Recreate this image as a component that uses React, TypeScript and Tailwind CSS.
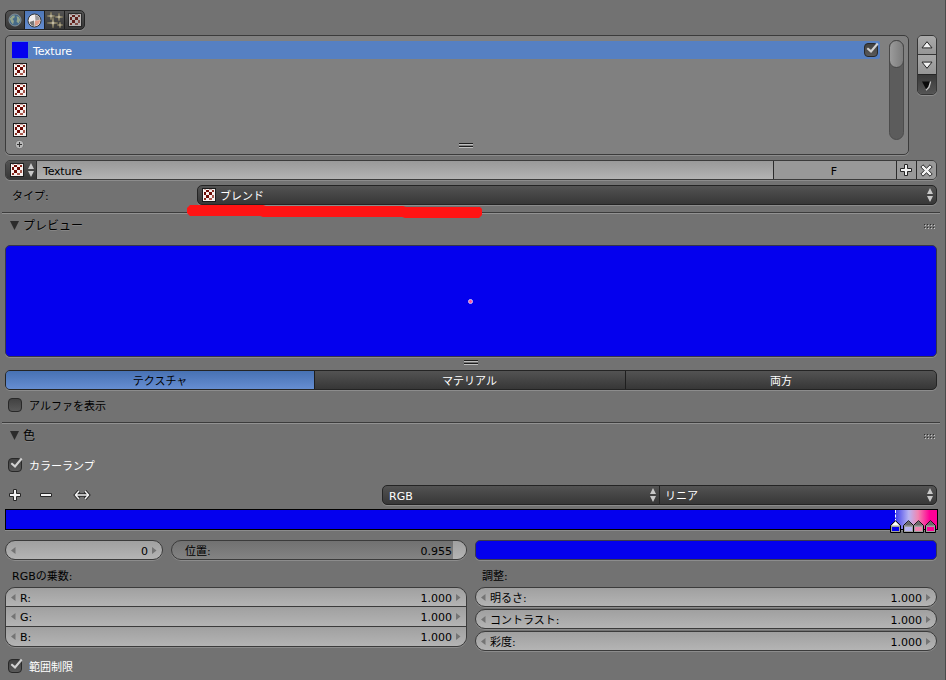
import type { ReactNode } from 'react';

const emboss = 'shadow-[0_1px_0_#8c8c8c]';
const lightFill = 'bg-linear-to-b from-[#999999] to-[#b3b3b3]';
const numberFill = 'bg-linear-to-b from-[#a0a0a0] to-[#b4b4b4]';
const darkFill = 'bg-linear-to-b from-[#535353] to-[#373737]';

const rampStops = [
  { left: 884, color: '#0400ee', active: true },
  { left: 897, color: '#b9b5f2', active: false },
  { left: 907, color: '#f285b0', active: false },
  { left: 919, color: '#ff0096', active: false },
];

const multipliers = ['R:', 'G:', 'B:'];
const adjustments = ['明るさ:', 'コントラスト:', '彩度:'];

const checks = [
  [4, 2, 3, 2], [10, 2, 2, 2],
  [2, 4, 2, 3], [7, 4, 3, 3],
  [4, 7, 3, 3], [10, 7, 2, 3],
  [2, 10, 2, 2], [7, 10, 3, 2],
  [2, 1, 2, 1], [7, 1, 3, 1],
];

function CheckerIcon({ dim = false }: { dim?: boolean }) {
  return (
    <svg width="14" height="14" shapeRendering="crispEdges" opacity={dim ? 0.65 : 1} className="shrink-0">
      <rect width="14" height="14" fill="#1c1c1c" />
      <rect x="1" y="1" width="12" height="12" fill="#f6f0ef" />
      {checks.map(([x, y, w, h], i) => (
        <rect key={i} x={x} y={y} width={w} height={h} fill={y === 1 ? '#c9a09b' : x + y > 15 ? '#a8584d' : x + y > 11 ? '#8a2c20' : '#6e0b04'} />
      ))}
    </svg>
  );
}

function WorldIcon() {
  return (
    <svg width="14" height="14" viewBox="0 0 14 14">
      <circle cx="7" cy="7" r="6" fill="#456a88" stroke="#84919a" />
      <path d="M1.8 5.5L4.5 2.5L7 2.5L6.5 4.5L4.5 6L6 8L5 11.5L3 9Z" fill="#93a58d" />
      <path d="M8.5 3L11 4L12.3 7L10.5 10.5L8.5 8.5L9.2 6Z" fill="#93a58d" />
    </svg>
  );
}

function MaterialIcon() {
  return (
    <svg width="15" height="15" viewBox="0 0 15 15">
      <circle cx="7.5" cy="7.5" r="6.5" fill="#f2eeee" stroke="#333" />
      <path d="M8 2A5.5 5.5 0 0 1 13 6.5L8.5 8Z" fill="#9b9696" />
      <path d="M2.5 9L7 7.5L7.5 13A5.5 5.5 0 0 1 2.5 9Z" fill="#777777" />
      <path d="M8 8L13 7A5.5 5.5 0 0 1 8 13Z" fill="#df9b87" />
    </svg>
  );
}

function ParticlesIcon() {
  return (
    <svg width="16" height="16" viewBox="0 0 16 16" fill="#d2ccb8" stroke="#8d8159" strokeWidth="0.5">
      <path d="M4 0L4.7 3.3L8 4L4.7 4.7L4 8L3.3 4.7L0 4L3.3 3.3Z" />
      <path d="M12 1L12.7 4.3L16 5L12.7 5.7L12 9L11.3 5.7L8 5L11.3 4.3Z" />
      <path d="M6 5L6.8 10.2L11 11L6.8 11.8L6 16L5.2 11.8L0 11L5.2 10.2Z" />
      <path d="M13 10L13.6 12.4L16 13L13.6 13.6L13 16L12.4 13.6L10 13L12.4 12.4Z" />
    </svg>
  );
}

function UpDown() {
  return (
    <svg width="6" height="14" viewBox="0 0 6 14" fill="#c8c8c8">
      <path d="M3 0L6 6H0ZM3 14L0 8H6Z" />
    </svg>
  );
}

function Checkbox({ checked = false }: { checked?: boolean }) {
  return (
    <svg width="16" height="16" viewBox="0 0 16 16" className="shrink-0 overflow-visible">
      <defs>
        <linearGradient id="box" x2="0" y2="1">
          <stop stopColor="#414141" />
          <stop offset="1" stopColor="#5a5a5a" />
        </linearGradient>
      </defs>
      <rect x=".5" y="1.5" width="13" height="13" rx="3.5" fill="url(#box)" stroke="#282828" />
      {checked && <path d="M3.3 6.2L7 9.4L13.7 1.5" fill="none" stroke="#d2d2d2" strokeWidth="2.1" />}
    </svg>
  );
}

function Arrow({ flip = false }: { flip?: boolean }) {
  return (
    <svg width="5" height="7" viewBox="0 0 5 7" fill="#747474">
      <path d={flip ? 'M0 0L4.5 3.5L0 7Z' : 'M4.5 0L0 3.5L4.5 7Z'} />
    </svg>
  );
}

function Grip() {
  return (
    <svg width="14" height="6" shapeRendering="crispEdges">
      <path d="M0 .5H14M0 3.5H14" stroke="#1e1e1e" />
      <path d="M0 1.5H14M0 4.5H14" stroke="#c0c0c0" />
    </svg>
  );
}

function PanelHeader({ title }: { title: string }) {
  return (
    <div className="flex h-[22px] items-center pr-[10px] pl-[7px]">
      <svg width="9" height="9" viewBox="0 0 9 9">
        <path d="M0 0H9L4.5 9Z" fill="#2b2b2b" />
      </svg>
      <span className="ml-1 pt-0.5 text-xs leading-[14px] [text-shadow:0_1px_0_#858585]">{title}</span>
      <svg width="11" height="6" shapeRendering="crispEdges" className="mt-[3px] ml-auto">
        {[0, 3, 6, 9].map((x) => (
          <g key={x}>
            <path d={`M${x} .5h1M${x} 3.5h1`} stroke="#303030" />
            <path d={`M${x + 1} 1.5h1M${x + 1} 4.5h1`} stroke="#c8c8c8" />
          </g>
        ))}
      </svg>
    </div>
  );
}

function Divider() {
  return <div className="ml-0.5 h-0.5 w-[938px] border-t border-b border-t-[#3c3c3c] border-b-[#929292]" />;
}

function NumberField({ label, value, className }: { label?: string; value: string; className: string }) {
  return (
    <div className={`flex items-center border-[#3b3b3b] pr-[5px] pl-[5px] ${numberFill} ${className}`}>
      <Arrow />
      <span className="ml-1">{label}</span>
      <span className="mr-1 ml-auto">{value}</span>
      <Arrow flip />
    </div>
  );
}

function Dropdown({ children, className }: { children: ReactNode; className: string }) {
  return (
    <div className={`flex h-5 items-center border border-[#242424] pr-[3px] text-white ${darkFill} ${emboss} ${className}`}>
      {children}
      <span className="ml-auto">
        <UpDown />
      </span>
    </div>
  );
}

function TextureList() {
  return (
    <div className="mt-[5px] ml-[5px] flex h-[120px]">
      <div className={`relative flex w-[904px] rounded-[5px] border border-[#3b3b3b] bg-[#808080] ${emboss}`}>
        <div className="ml-1.5 w-[868px] pt-[5px]">
          <div className="flex h-[18px] items-center rounded-[2px] bg-[#5680c2] text-white">
            <div className="size-4 bg-[#0400ee]" />
            <span className="ml-[5px] pt-[3px] tracking-[-0.2px]">Texture</span>
            <span className="ml-auto">
              <Checkbox checked />
            </span>
          </div>
          {[0, 1, 2, 3].map((i) => (
            <div key={i} className="flex h-5 items-center pt-0.5 pl-px">
              <CheckerIcon />
            </div>
          ))}
          <svg width="10" height="10" viewBox="0 0 10 10" className="mt-px ml-[3px]">
            <circle cx="4.5" cy="4.5" r="4.2" fill="#b8b8b8" stroke="#5e5e5e" strokeWidth=".6" />
            <path d="M4.5 2V7M2 4.5H7" stroke="#333" />
          </svg>
        </div>
        <div className="mt-1 ml-[9px] h-[100px] w-[15px] rounded-full border border-[#4c4c4c] bg-[#5c5c5c]">
          <div className="-m-px h-7 w-[15px] rounded-full border border-[#484848] bg-linear-to-r from-[#9b9b9b] to-[#7c7c7c]" />
        </div>
        <div className="absolute top-[107px] left-[453px]">
          <Grip />
        </div>
      </div>
      <div className={`ml-2 h-[60px] w-5 overflow-hidden rounded-[5px] border border-[#353535] ${emboss}`}>
        <div className="flex h-[19px] items-center justify-center border-b border-[#353535] bg-linear-to-b from-[#aaaaaa] to-[#969696]">
          <svg width="12" height="8" viewBox="0 0 12 8">
            <path d="M6 .7L11 6.9H1Z" fill="#f2f2f2" stroke="#252525" />
          </svg>
        </div>
        <div className="flex h-5 items-center justify-center border-b border-[#252525] bg-linear-to-b from-[#a8a8a8] to-[#969696]">
          <svg width="12" height="8" viewBox="0 0 12 8">
            <path d="M6 7.3L11 1.1H1Z" fill="#f2f2f2" stroke="#252525" />
          </svg>
        </div>
        <div className="flex h-[19px] items-center justify-center bg-linear-to-b from-[#3a3a3a] to-[#555555] pt-0.5">
          <svg width="10" height="10" viewBox="0 0 10 10">
            <path d="M0 .5H8.5L4.5 9Z" fill="#0b0b0b" />
            <path d="M8.6 .5L7 6.2L4 9.3" fill="none" stroke="#c4c4c4" strokeWidth="1.3" />
          </svg>
        </div>
      </div>
    </div>
  );
}

function ColorRamp() {
  return (
    <div className={`relative mt-1 ml-[5px] flex h-[21px] w-[933px] border border-black bg-[#0400ee] ${emboss}`}>
      <div className="ml-auto h-full w-[42px] bg-[linear-gradient(90deg,#3c3cea_0%,#b9b5f2_33%,#f285b0_55%,#ff0096_82%)]" />
      <div className="absolute top-0 left-[889px] h-3 border-l border-dashed border-white" />
      {rampStops.map((stop) => (
        <svg key={stop.left} width="11" height="14" viewBox="0 0 11 14" className="absolute top-[10px]" style={{ left: stop.left }}>
          <path d="M.5 5.5L5.5 .8L10.5 5.5V12.5H.5Z" fill="#a0a0a0" stroke="#000" />
          <path d="M1.5 5.5L5.5 1.6L9.5 5.5Z" fill={stop.active ? '#fff' : '#686868'} />
          <rect x="2" y="7" width="7" height="4" fill={stop.color} />
        </svg>
      ))}
    </div>
  );
}

export default function App() {
  return (
    <div className="h-[680px] w-[946px] overflow-hidden border-r border-[#4b4b4b] bg-[#727272] font-['DejaVu_Sans','Noto_Sans_CJK_JP',sans-serif] text-[11px] leading-[14px] text-black">
      <div className="pt-[10px] pl-[5px]">
        <div className={`flex h-5 w-20 overflow-hidden rounded-[5px] border border-[#232323] ${darkFill} ${emboss}`}>
          <div className="flex w-[19px] items-center justify-center border-r border-[#1e1e1e]"><WorldIcon /></div>
          <div className="flex w-5 items-center justify-center border-r border-[#1e1e1e] bg-linear-to-b from-[#4d76b7] to-[#658dd0]"><MaterialIcon /></div>
          <div className="flex w-5 items-center justify-center border-r border-[#1e1e1e]"><ParticlesIcon /></div>
          <div className="flex w-[19px] items-center justify-center"><CheckerIcon dim /></div>
        </div>
      </div>

      <TextureList />

      <div className={`mt-[5px] ml-[5px] flex h-5 w-[932px] overflow-hidden rounded-[5px] border border-[#3b3b3b] ${emboss}`}>
        <div className={`flex w-[31px] items-center justify-between border-r border-[#2b2b2b] pr-[2px] pl-1 ${darkFill}`}>
          <CheckerIcon />
          <UpDown />
        </div>
        <div className={`w-[737px] border-r border-[#2b2b2b] pt-1 pl-[6px] tracking-[-0.2px] ${lightFill}`}>Texture</div>
        <div className="w-[123px] border-r border-[#2b2b2b] bg-[#999999] pt-1 pr-0.5 text-center">F</div>
        <div className="flex w-5 items-center justify-center border-r border-[#2b2b2b] bg-[#999999]">
          <svg width="13" height="13" viewBox="0 0 13 13">
            <path d="M4.5 .5H7.5V4.5H11.5V7.5H7.5V11.5H4.5V7.5H.5V4.5H4.5Z" fill="#f2f2f2" stroke="#262626" />
          </svg>
        </div>
        <div className="flex flex-1 items-center justify-center bg-[#999999]">
          <svg width="13" height="13" viewBox="0 0 13 13">
            <path d="M3 .8L6.5 4.2L10 .8L12.2 3L8.8 6.5L12.2 10L10 12.2L6.5 8.8L3 12.2L.8 10L4.2 6.5L.8 3Z" fill="#f2f2f2" stroke="#262626" />
          </svg>
        </div>
      </div>

      <div className="relative mt-[5px] flex h-5 pl-3">
        <span className="w-[185px] pt-[5px] [text-shadow:0_1px_0_#858585]">タイプ:</span>
        <Dropdown className="w-[740px] rounded-[5px] pl-1">
          <CheckerIcon />
          <span className="ml-1 pt-[3px]">ブレンド</span>
        </Dropdown>
        <svg width="296" height="14" viewBox="0 0 296 14" className="absolute top-5 left-[187px] z-10">
          <path d="M3 0H76L79 1H216L219 2H293L295 4V10L292 13H218L215 12H76L73 11H3L0 8V3Z" fill="#ff1414" />
        </svg>
      </div>

      <div className="mt-[7px]"><Divider /></div>
      <div className="pl-[3px]"><PanelHeader title="プレビュー" /></div>
      <div className={`mt-[9px] ml-[5px] flex h-28 w-[932px] items-center justify-center rounded-[5px] border border-[#35354a] bg-[#0400ee] pt-px pr-px ${emboss}`}>
        <div className="size-[5px] rounded-full border border-[#c9c4f5] bg-[#ff559b]" />
      </div>
      <div className="flex h-[13px] justify-center pt-[3px] pr-1"><Grip /></div>

      <div className={`ml-[5px] flex h-5 w-[932px] overflow-hidden rounded-[5px] border border-[#242424] text-center text-white ${darkFill} ${emboss}`}>
        <div className="w-[309px] border-r border-[#1e1e1e] bg-linear-to-b from-[#4771b3] to-[#668ed2] pt-1 text-black">テクスチャ</div>
        <div className="w-[311px] border-r border-[#1e1e1e] pt-1 pr-px">マテリアル</div>
        <div className="flex-1 pt-1">両方</div>
      </div>
      <div className="mt-[7px] flex h-4 items-center pl-2">
        <Checkbox />
        <span className="ml-[5px] pt-1">アルファを表示</span>
      </div>

      <div className="mt-[9px]"><Divider /></div>
      <div className="pl-[3px]"><PanelHeader title="色" /></div>
      <div className="mt-[11px] flex h-4 items-center pl-2 text-white">
        <Checkbox checked />
        <span className="ml-[5px] pt-1">カラーランプ</span>
      </div>

      <div className="mt-3 flex h-5 items-center pl-2">
        <svg width="84" height="14" viewBox="0 0 84 14" className="mr-[290px]" fill="#f2f2f2" stroke="#262626">
          <path d="M5.5 1.5H8.5V5.5H12.5V8.5H8.5V12.5H5.5V8.5H1.5V5.5H5.5Z" />
          <path d="M32.5 5.5H43.5V8.5H32.5Z" />
          <path d="M71 3L67.5 7L71 11M67.5 7H80.5M77 3L80.5 7L77 11" fill="none" strokeWidth="3.4" />
          <path d="M71 3L67.5 7L71 11M67.5 7H80.5M77 3L80.5 7L77 11" fill="none" stroke="#f2f2f2" strokeWidth="1.5" />
        </svg>
        <Dropdown className="w-[278px] rounded-l-[5px] pl-[6px]">
          <span className="pt-[3px]">RGB</span>
        </Dropdown>
        <Dropdown className="-ml-px w-[278px] rounded-r-[5px] pl-[5px]">
          <span className="pt-[3px]">リニア</span>
        </Dropdown>
      </div>

      <ColorRamp />

      <div className="mt-[10px] flex h-5 gap-2 pl-[5px]">
        <NumberField value="0" className="w-[158px] rounded-full border shadow-[0_1px_0_#8c8c8c] [&>span]:pt-[3px]" />
        <div className={`flex w-[296px] items-center overflow-hidden rounded-full border border-[#3b3b3b] bg-[linear-gradient(#717171,#838383)] ${emboss}`}>
          <span className="ml-[13px] pt-[3px]">位置:</span>
          <span className="ml-auto pt-[3px] pr-px">0.955</span>
          <div className={`h-full w-[13px] ${numberFill}`} />
        </div>
        <div className={`w-[462px] rounded-[5px] border border-[#3b3b4b] bg-[#0400ee] ${emboss}`} />
      </div>

      <div className="mt-[9px] flex gap-2 pl-[5px]">
        <div className="w-[462px]">
          <div className="h-[18px] pt-px pl-[7px]">RGBの乗数:</div>
          <div className={`overflow-hidden rounded-[10px] border border-[#3b3b3b] ${emboss}`}>
            {multipliers.map((label, i) => (
              <NumberField key={label} label={label} value="1.000" className={i === 0 ? 'h-[18px] [&>span]:pt-[3px]' : 'h-5 border-t [&>span]:pt-0.5'} />
            ))}
          </div>
        </div>
        <div className="w-[462px]">
          <div className="h-[18px] pt-px pl-[7px]">調整:</div>
          <div className="flex flex-col gap-0.5">
            {adjustments.map((label) => (
              <NumberField key={label} label={label} value="1.000" className="h-5 rounded-full border shadow-[0_1px_0_#8c8c8c] [&>span]:pt-[3px]" />
            ))}
          </div>
        </div>
      </div>

      <div className="mt-[7px] flex h-4 items-center pl-2 text-white">
        <Checkbox checked />
        <span className="ml-[5px] pt-1">範囲制限</span>
      </div>
    </div>
  );
}
